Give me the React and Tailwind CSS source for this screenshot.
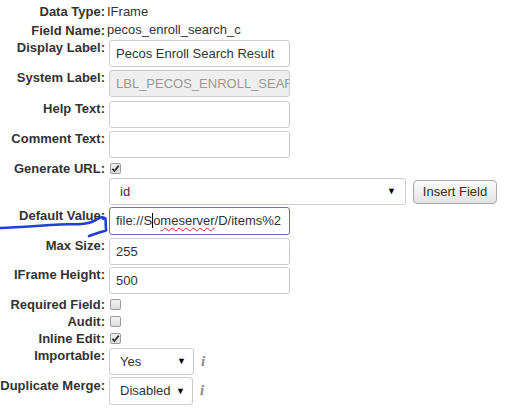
import React from 'react'

function Label({ children, className = '' }) {
  return (
    <div className={`w-[105px] shrink-0 text-right font-bold leading-[15px] ${className}`}>
      {children}
    </div>
  )
}

function TextInput({ value = '', disabled, focused, className = '' }) {
  const border = focused ? 'border-[#7a68b6]' : 'border-[#cccccc]'
  const bg = disabled ? 'bg-[#eeeeee] text-[#999999]' : 'bg-white text-[#333333]'
  return (
    <div
      className={`ml-[4px] w-[181px] h-[27px] border ${border} ${bg} rounded-[3px] pl-[6px] flex items-center overflow-hidden whitespace-nowrap ${className}`}
    >
      {value}
    </div>
  )
}

function Checkbox({ checked }) {
  return (
    <div className="ml-[5px] w-[11px] h-[11px] rounded-[2px] border border-[#9a9a9a] bg-gradient-to-b from-[#f2f2f2] to-[#dcdcdc] flex items-center justify-center">
      {checked && (
        <svg width="9" height="9" viewBox="0 0 9 9">
          <path d="M1.3 4.8 L3.4 7 L7.8 1.6" fill="none" stroke="#333" strokeWidth="1.8" />
        </svg>
      )}
    </div>
  )
}

function Select({ value, width, arrowRight, className = '' }) {
  return (
    <div
      className={`ml-[4px] h-[27px] border border-[#cccccc] rounded-[3px] bg-white relative flex items-center pl-[10px] text-[#333333] ${className}`}
      style={{ width }}
    >
      {value}
      <span className="absolute text-[9px] text-black leading-none" style={{ right: arrowRight }}>
        ▼
      </span>
    </div>
  )
}

function Info() {
  return (
    <span className="ml-[7px] text-[#888888] italic font-bold text-[15px] leading-none" style={{ fontFamily: '"Liberation Serif", serif' }}>
      i
    </span>
  )
}

export default function App() {
  return (
    <div
      className="relative w-[506px] h-[414px] bg-white text-[13px] text-[#333333] overflow-hidden"
      style={{ fontFamily: '"Liberation Sans", Arial, sans-serif' }}
    >
      <div className="pt-[3px] flex flex-col">
        <div className="flex items-center h-[17px]">
          <Label>Data Type:</Label>
          <span className="ml-[2px]">IFrame</span>
        </div>
        <div className="flex items-center h-[18px] mt-[1px]">
          <Label>Field Name:</Label>
          <span className="ml-[2px]">pecos_enroll_search_c</span>
        </div>

        <div className="flex mt-[1px]">
          <Label>Display Label:</Label>
          <TextInput value="Pecos Enroll Search Result" />
        </div>
        <div className="flex mt-[3px]">
          <Label>System Label:</Label>
          <TextInput value="LBL_PECOS_ENROLL_SEARCH_RESULT" disabled />
        </div>
        <div className="flex mt-[4px]">
          <Label>Help Text:</Label>
          <TextInput />
        </div>
        <div className="flex mt-[3px]">
          <Label>Comment Text:</Label>
          <TextInput />
        </div>

        <div className="flex items-center h-[15px] mt-[3px]">
          <Label>Generate URL:</Label>
          <Checkbox checked />
        </div>

        <div className="flex items-center mt-[2px]">
          <div className="w-[105px] shrink-0" />
          <Select value="id" width={297} arrowRight={9} />
          <button className="ml-[7px] h-[24px] w-[84px] rounded-[4px] border border-[#a9a9a9] bg-gradient-to-b from-[#fbfbfb] to-[#e2e2e2] text-[#333333] text-[13px]">
            Insert Field
          </button>
        </div>

        <div className="flex mt-[2px]">
          <Label className="pt-[1px]">Default Value:</Label>
          <TextInput
            focused
            className="h-[28px]"
            value={
              <span>
                file://S<span className="border-l border-black">o</span>
                <span className="underline decoration-wavy decoration-[#e02020] decoration-1 underline-offset-2">
                  meserver
                </span>
                /D/items%2
              </span>
            }
          />
        </div>
        <div className="flex mt-[3px]">
          <Label>Max Size:</Label>
          <TextInput value="255" />
        </div>
        <div className="flex mt-[2px]">
          <Label>IFrame Height:</Label>
          <TextInput value="500" />
        </div>

        <div className="flex items-center h-[15px] mt-[3px]">
          <Label>Required Field:</Label>
          <Checkbox />
        </div>
        <div className="flex items-center h-[15px] mt-[2px]">
          <Label>Audit:</Label>
          <Checkbox />
        </div>
        <div className="flex items-center h-[15px] mt-[2px]">
          <Label>Inline Edit:</Label>
          <Checkbox checked />
        </div>

        <div className="flex mt-[2px]">
          <Label>Importable:</Label>
          <Select value="Yes" width={85} arrowRight={7} className="mt-[0px]" />
          <div className="h-[27px] flex items-center">
            <Info />
          </div>
        </div>
        <div className="flex mt-[2px]">
          <Label className="pt-[1px]">Duplicate Merge:</Label>
          <Select value="Disabled" width={84} arrowRight={7} className="h-[28px]" />
          <div className="h-[27px] flex items-center">
            <Info />
          </div>
        </div>
      </div>

      {/* hand-drawn marker over the Default Value row */}
      <svg className="absolute left-0 top-0 pointer-events-none" width="506" height="414">
        <path
          d="M0 228 C 20 227.5, 40 225.5, 60 224.5 C 75 224, 87 225, 95 220.5 C 99 217.5, 103 216, 105.5 218.5 L 106 230.5 C 100 232, 95 234, 89 236"
          fill="none"
          stroke="#1f3fd6"
          strokeWidth="2.6"
          strokeLinecap="round"
          strokeLinejoin="round"
        />
      </svg>
    </div>
  )
}
